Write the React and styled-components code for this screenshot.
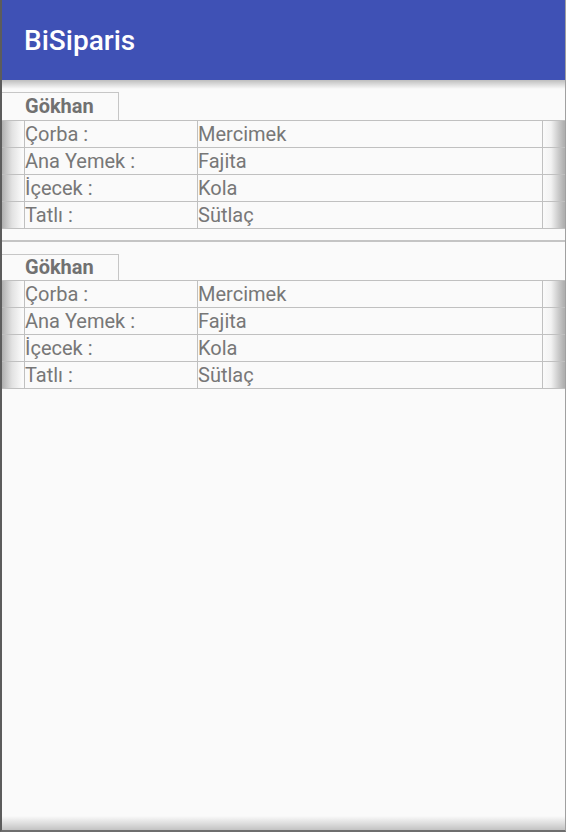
import React from "react";
import styled, { createGlobalStyle } from "styled-components";

const Global = createGlobalStyle`
  html, body { margin: 0; padding: 0; background: #fafafa; }
  body { font-family: Roboto, "Noto Sans", "Liberation Sans", sans-serif; }
`;

const Screen = styled.div`
  position: relative;
  box-sizing: border-box;
  width: 566px;
  height: 832px;
  display: flex;
  flex-direction: column;
  background: #fafafa;
  border-left: 2px solid #5c5c5c;
  border-right: 1px solid #a0a0a0;
  border-bottom: 2px solid #6e6e6e;
  overflow: hidden;
  &::after {
    content: "";
    position: absolute;
    left: 0;
    right: 0;
    bottom: 0;
    height: 14px;
    background: linear-gradient(to bottom, rgba(0,0,0,0), rgba(0,0,0,0.22));
    pointer-events: none;
  }
`;

const AppBar = styled.header`
  position: relative;
  flex: 0 0 80px;
  display: flex;
  align-items: center;
  padding-left: 22px;
  background: #3f51b5;
  color: #ffffff;
  font-size: 28px;
  font-weight: 500;
  &::after {
    content: "";
    position: absolute;
    left: 0;
    right: 0;
    top: 80px;
    height: 9px;
    background: linear-gradient(to bottom, rgba(0,0,0,0.24), rgba(0,0,0,0));
  }
`;

const List = styled.main`
  display: flex;
  flex-direction: column;
`;

const Item = styled.section`
  padding: 12px 0 11px;
  border-bottom: ${(p) => (p.$divider ? "2px solid #c4c4c4" : "none")};
`;

const NameTag = styled.div`
  box-sizing: border-box;
  width: 117px;
  height: ${(p) => p.$h}px;
  padding-left: 23px;
  border-top: 1px solid #c6c6c6;
  border-right: 1px solid #c6c6c6;
  font-size: 20px;
  font-weight: 700;
  line-height: ${(p) => p.$h - 2}px;
  color: #717171;
`;

const Table = styled.div`
  border-bottom: 1px solid #c0c0c0;
`;

const Row = styled.div`
  display: grid;
  grid-template-columns: 22px 173px 345px 1fr;
  height: 27px;
  border-top: 1px solid #c0c0c0;
  box-sizing: border-box;
  font-size: 20px;
  line-height: 26px;
  color: #777777;
`;

const EdgeLeft = styled.div`
  background: linear-gradient(to right, #b0b0b0 0px, #e2e2e2 10px, #fafafa 20px);
`;

const Cell = styled.div`
  border-left: 1px solid #c0c0c0;
  white-space: nowrap;
`;

const EdgeRight = styled.div`
  border-left: 1px solid #c0c0c0;
  background: linear-gradient(to right, #fafafa 0px, #f2f2f2 8px, #c8c8c8 16px, #b0b0b0 21px);
`;

const rows = [
  ["Çorba :", "Mercimek"],
  ["Ana Yemek :", "Fajita"],
  ["İçecek :", "Kola"],
  ["Tatlı :", "Sütlaç"],
];

const orders = [
  { name: "Gökhan", tag: 28, rows },
  { name: "Gökhan", tag: 26, rows },
];

export default function App() {
  return (
    <>
      <Global />
      <Screen>
        <AppBar>BiSiparis</AppBar>
        <List>
          {orders.map((o, i) => (
            <Item key={i} $divider={i < orders.length - 1}>
              <NameTag $h={o.tag}>{o.name}</NameTag>
              <Table>
                {o.rows.map(([k, v]) => (
                  <Row key={k}>
                    <EdgeLeft />
                    <Cell>{k}</Cell>
                    <Cell>{v}</Cell>
                    <EdgeRight />
                  </Row>
                ))}
              </Table>
            </Item>
          ))}
        </List>
      </Screen>
    </>
  );
}
